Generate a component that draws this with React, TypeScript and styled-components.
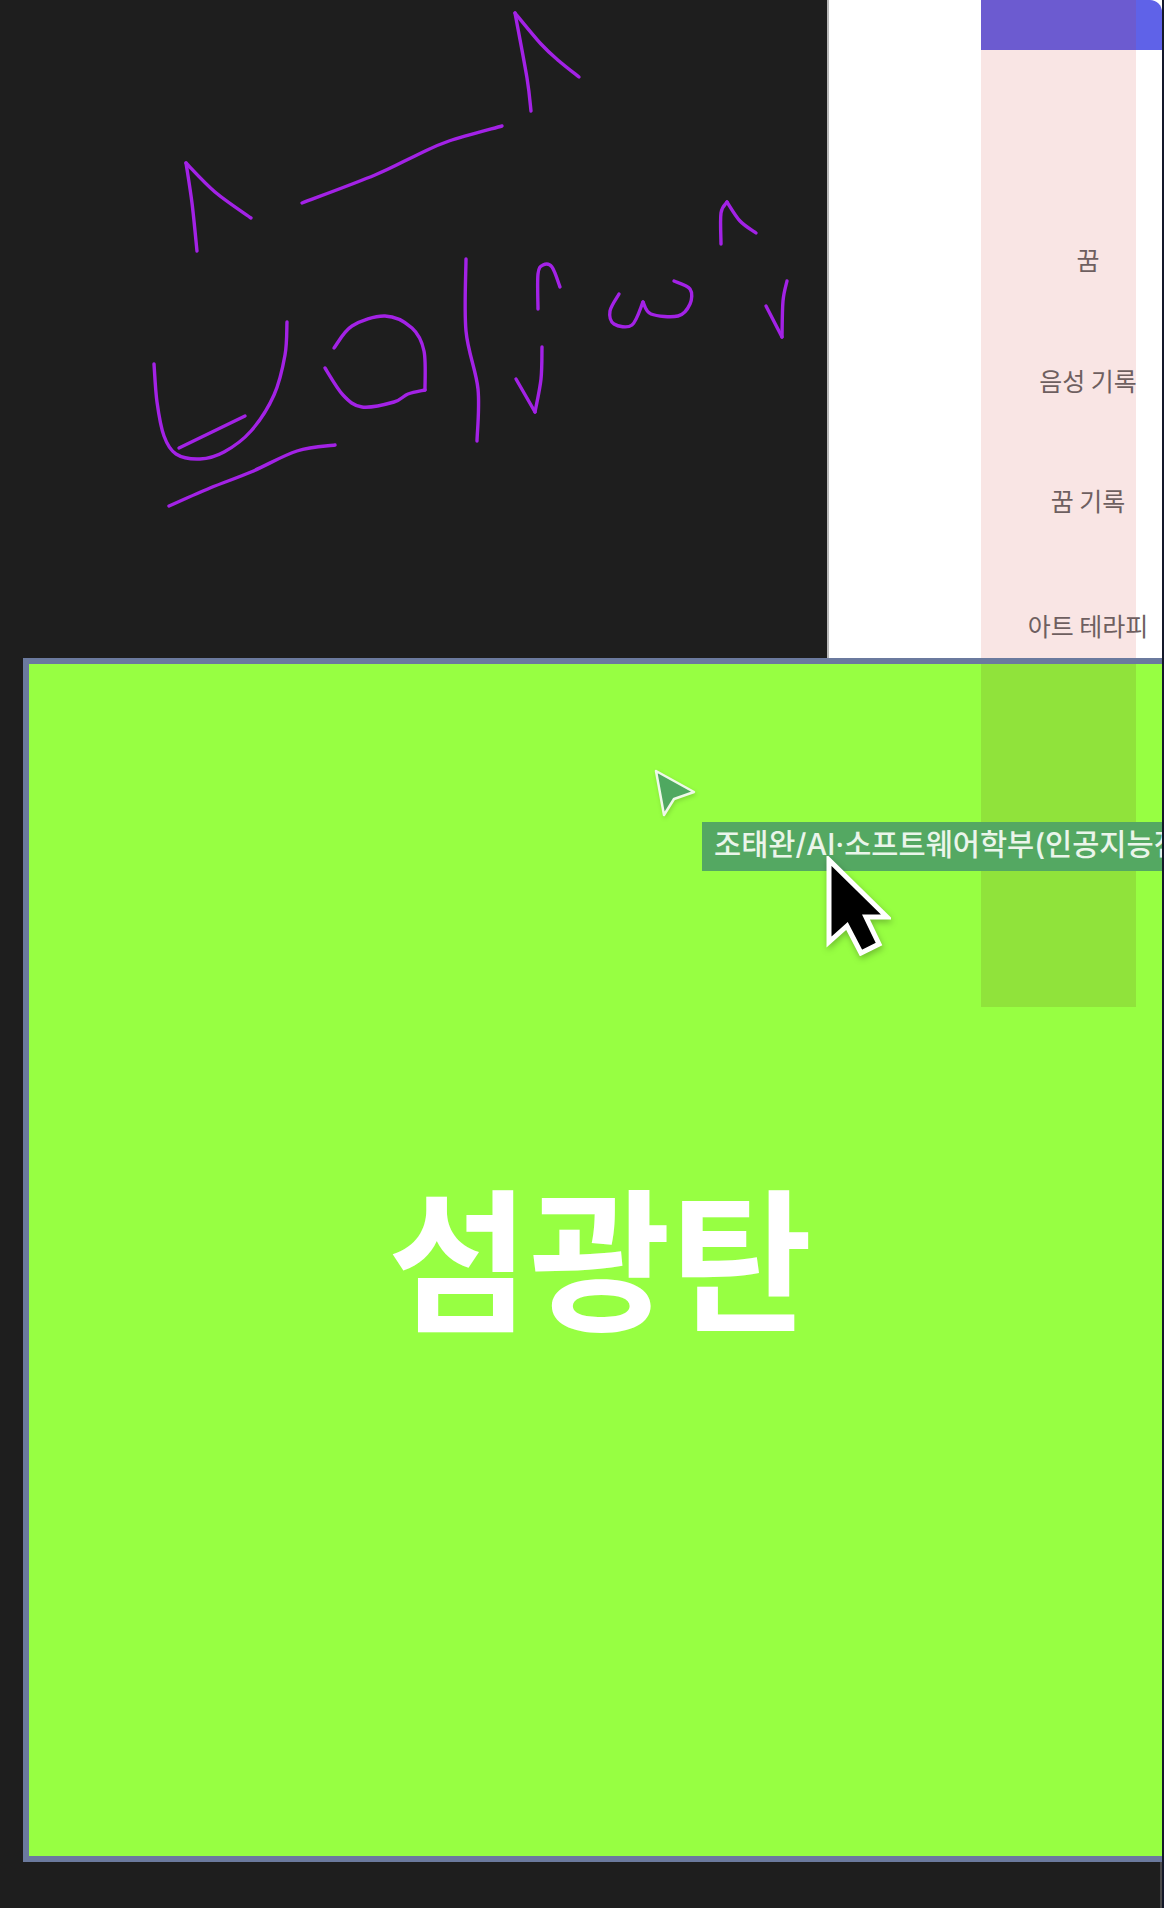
import React from "react";
import styled, { createGlobalStyle } from "styled-components";

const GlobalStyle = createGlobalStyle`
  html, body {
    margin: 0;
    padding: 0;
    background: #1e1e1e;
  }
`;

const sans = `"Noto Sans CJK KR", "Noto Sans", sans-serif`;

// hand drawn strokes on the canvas, one array per stroke
const strokes: number[][][] = [
  [[197, 251], [192, 203], [186, 163]],
  [[186, 163], [215, 192], [251, 218]],
  [[302, 203], [375, 175], [417, 155], [449, 141], [502, 126]],
  [[531, 111], [527, 78], [515, 13]],
  [[515, 13], [541, 44], [559, 61], [579, 77]],
  [[154, 364], [157, 402], [164, 436], [176, 454], [200, 459], [224, 452], [251, 431], [274, 395], [285, 355], [287, 322]],
  [[179, 448], [245, 416]],
  [[334, 348], [352, 326], [385, 316], [412, 328], [424, 351], [425, 390]],
  [[425, 390], [408, 394], [394, 402], [362, 407], [343, 395], [325, 368]],
  [[466, 259], [466, 331], [478, 389], [477, 441]],
  [[538, 309], [538, 274], [543, 265], [552, 267], [560, 287]],
  [[516, 379], [535, 412]],
  [[535, 412], [541, 379], [542, 347]],
  [[619, 294], [610, 311], [614, 324], [632, 325], [643, 302]],
  [[643, 302], [651, 314], [678, 316], [690, 304], [690, 289], [674, 281]],
  [[721, 244], [721, 213], [727, 202]],
  [[727, 202], [740, 221], [756, 233]],
  [[766, 306], [782, 337]],
  [[782, 337], [783, 301], [787, 281]],
  [[169, 506], [210, 488], [251, 472], [297, 451], [335, 445]],
];

// smooth line through the points
const toPath = (pts: number[][]) => {
  let d = `M${pts[0][0]} ${pts[0][1]}`;
  for (let i = 0; i < pts.length - 1; i++) {
    const p0 = pts[i - 1] || pts[i];
    const p1 = pts[i];
    const p2 = pts[i + 1];
    const p3 = pts[i + 2] || p2;
    const c1x = p1[0] + (p2[0] - p0[0]) / 6;
    const c1y = p1[1] + (p2[1] - p0[1]) / 6;
    const c2x = p2[0] - (p3[0] - p1[0]) / 6;
    const c2y = p2[1] - (p3[1] - p1[1]) / 6;
    d += ` C${c1x} ${c1y} ${c2x} ${c2y} ${p2[0]} ${p2[1]}`;
  }
  return d;
};

const App = () => {
  return (
    <Page>
      <GlobalStyle />
      <Inner>
        <TopRow>
          <Canvas>
            <svg width="827" height="658" viewBox="0 0 827 658" fill="none">
              {strokes.map((s, i) => (
                <path key={i} d={toPath(s)} stroke="#a322e6" strokeWidth="3.4" strokeLinecap="round" strokeLinejoin="round" />
              ))}
            </svg>
          </Canvas>
          <Panel>
            <Sidebar>
              <SideHeader>
                <SideHeaderTint />
              </SideHeader>
              <SideBody>
                <SideLabel $h={121}>꿈</SideLabel>
                <SideLabel $h={120}>음성 기록</SideLabel>
                <SideLabel $h={125}>꿈 기록</SideLabel>
                <SideLabel $h={60}>아트 테라피</SideLabel>
              </SideBody>
            </Sidebar>
          </Panel>
        </TopRow>
        <Frame>
          <Flash>섬광탄</Flash>
          <SideShade />
          <PeerArrow viewBox="0 0 44 50">
            <path d="M3 3 L41 24 L21 31 L11 47 Z" fill="#4fa860" stroke="#eef8e8" strokeWidth="2.5" strokeLinejoin="round" />
          </PeerArrow>
          <PeerTag>조태완/AI·소프트웨어학부(인공지능전공)</PeerTag>
          <MyCursor viewBox="0 0 66 100">
            <path d="M4 4 L4 86 L22 70 L36 97 L54 88 L41 61 L62 61 Z" fill="#000" stroke="#fff" strokeWidth="5" strokeLinejoin="miter" />
          </MyCursor>
        </Frame>
        <BottomRow>
          <BottomEdge />
        </BottomRow>
      </Inner>
    </Page>
  );
};

export default App;

const Page = styled.div`
  width: 1164px;
  height: 1908px;
  box-sizing: border-box;
  border-right: 2px solid #14182a;
  background: #1e1e1e;
  font-family: ${sans};
`;

const Inner = styled.div`
  width: 1162px;
  height: 100%;
  overflow: hidden;
`;

const TopRow = styled.div`
  display: flex;
  height: 658px;
`;

const Canvas = styled.div`
  width: 827px;
  height: 100%;
  flex-shrink: 0;
  background: #1e1e1e;
  svg {
    display: block;
  }
`;

const Panel = styled.div`
  flex: 1;
  min-width: 0;
  height: 100%;
  background: #fff;
  border-left: 2px solid #b9b9b9;
  padding-left: 152px;
  overflow: hidden;
  box-sizing: border-box;
`;

const Sidebar = styled.div`
  width: 181px;
  height: 100%;
  display: flex;
  flex-direction: column;
`;

const SideHeader = styled.div`
  height: 50px;
  flex-shrink: 0;
  background: #5f62e8;
  border-top-right-radius: 12px;
`;

const SideHeaderTint = styled.div`
  width: 155px;
  height: 100%;
  background: #6c5bd0;
`;

const SideBody = styled.div`
  width: 155px;
  flex: 1;
  background: #f9e5e4;
  padding-top: 149px;
  box-sizing: border-box;
`;

const SideLabel = styled.div<{ $h: number }>`
  width: 214px;
  height: ${(p) => p.$h}px;
  text-align: center;
  font-size: 25px;
  line-height: 120px;
  color: #6e5f60;
  white-space: nowrap;
`;

const Frame = styled.div`
  position: relative;
  width: 1200px;
  height: 1204px;
  margin-left: 23px;
  background: #97ff42;
  border: 6px solid #6b7a9e;
  box-sizing: border-box;
  display: flex;
  align-items: center;
  justify-content: center;
`;

const Flash = styled.div`
  width: 1154px;
  margin-left: -46px;
  margin-top: -14px;
  text-align: center;
  font-size: 154px;
  line-height: 1;
  font-weight: 700;
  color: #fff;
`;

const SideShade = styled.div`
  position: absolute;
  left: 952px;
  top: 0;
  width: 155px;
  height: 343px;
  background: #90e33b;
`;

const PeerArrow = styled.svg`
  position: absolute;
  left: 624px;
  top: 104px;
  width: 44px;
  height: 50px;
  filter: drop-shadow(1px 2px 2px rgba(0, 0, 0, 0.15));
`;

const PeerTag = styled.div`
  position: absolute;
  left: 673px;
  top: 158px;
  height: 49px;
  padding: 0 12px;
  background: #54a862;
  color: #eaf5ea;
  font-family: Inter, ${sans};
  font-size: 29.5px;
  font-weight: 500;
  line-height: 44px;
  white-space: nowrap;
`;

const MyCursor = styled.svg`
  position: absolute;
  left: 796px;
  top: 192px;
  width: 66px;
  height: 100px;
  filter: drop-shadow(1px 3px 3px rgba(0, 0, 0, 0.25));
`;

const BottomRow = styled.div`
  height: 46px;
  display: flex;
  justify-content: flex-end;
`;

const BottomEdge = styled.div`
  width: 2px;
  height: 100%;
  background: #4a4a4a;
`;
